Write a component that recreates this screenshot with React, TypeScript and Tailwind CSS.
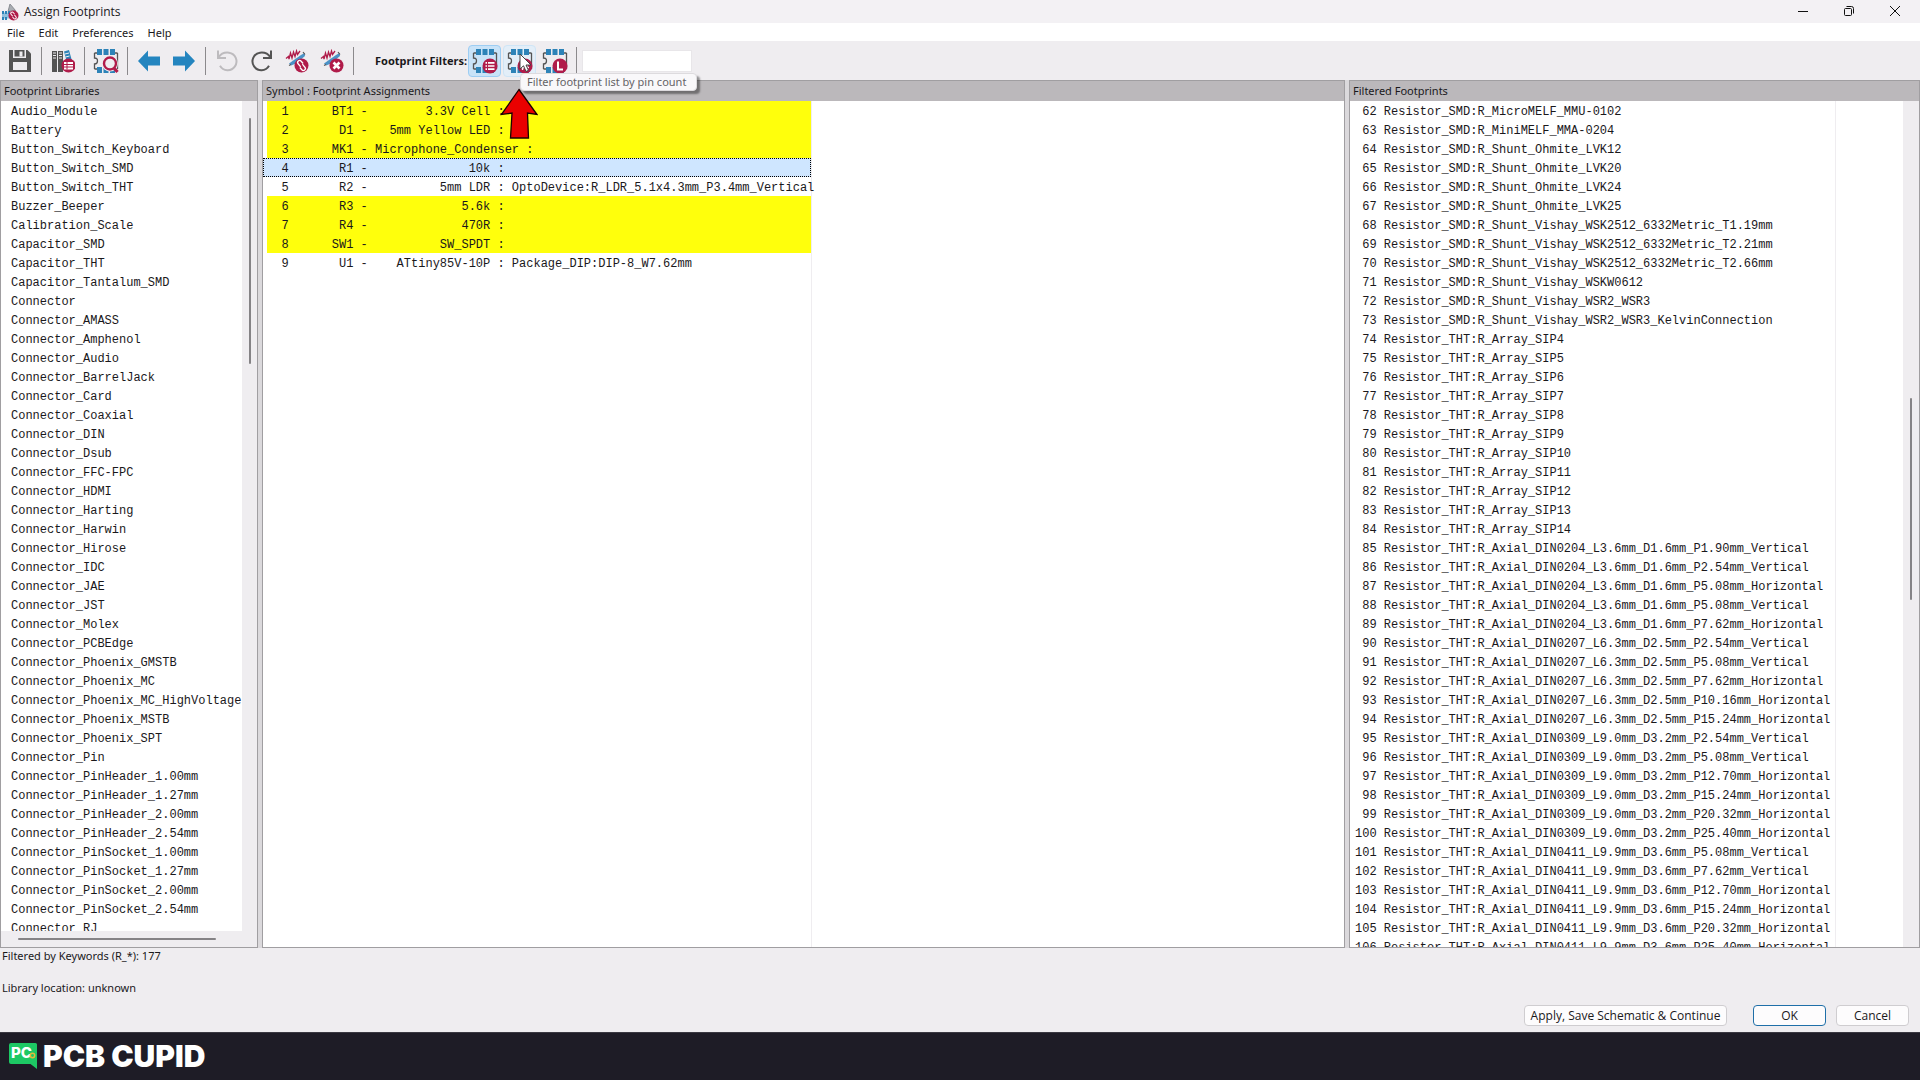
/**
 * Footprint assignment window.
 * Three list panels (libraries, symbols, filtered footprints) under a toolbar,
 * with the status lines, the dialog buttons and the channel strip below.
 */
import type { ReactNode } from "react";

interface Assignment {
  ref: string;
  value: string;
  footprint?: string;
  selected?: boolean;
}

const MENUS = ["File", "Edit", "Preferences", "Help"];

const LIBRARIES = [
  "Audio_Module", "Battery", "Button_Switch_Keyboard", "Button_Switch_SMD", "Button_Switch_THT",
  "Buzzer_Beeper", "Calibration_Scale", "Capacitor_SMD", "Capacitor_THT", "Capacitor_Tantalum_SMD",
  "Connector", "Connector_AMASS", "Connector_Amphenol", "Connector_Audio", "Connector_BarrelJack",
  "Connector_Card", "Connector_Coaxial", "Connector_DIN", "Connector_Dsub", "Connector_FFC-FPC",
  "Connector_HDMI", "Connector_Harting", "Connector_Harwin", "Connector_Hirose", "Connector_IDC",
  "Connector_JAE", "Connector_JST", "Connector_Molex", "Connector_PCBEdge", "Connector_Phoenix_GMSTB",
  "Connector_Phoenix_MC", "Connector_Phoenix_MC_HighVoltage", "Connector_Phoenix_MSTB",
  "Connector_Phoenix_SPT", "Connector_Pin", "Connector_PinHeader_1.00mm", "Connector_PinHeader_1.27mm",
  "Connector_PinHeader_2.00mm", "Connector_PinHeader_2.54mm", "Connector_PinSocket_1.00mm",
  "Connector_PinSocket_1.27mm", "Connector_PinSocket_2.00mm", "Connector_PinSocket_2.54mm", "Connector_RJ",
];

const ASSIGNMENTS: Assignment[] = [
  { ref: "BT1", value: "3.3V Cell" },
  { ref: "D1", value: "5mm Yellow LED" },
  { ref: "MK1", value: "Microphone_Condenser" },
  { ref: "R1", value: "10k", selected: true },
  { ref: "R2", value: "5mm LDR", footprint: "OptoDevice:R_LDR_5.1x4.3mm_P3.4mm_Vertical" },
  { ref: "R3", value: "5.6k" },
  { ref: "R4", value: "470R" },
  { ref: "SW1", value: "SW_SPDT" },
  { ref: "U1", value: "ATtiny85V-10P", footprint: "Package_DIP:DIP-8_W7.62mm" },
];

// The list is scrolled, the first visible footprint is number 62
const FIRST_FOOTPRINT = 62;
const FOOTPRINTS = [
  "Resistor_SMD:R_MicroMELF_MMU-0102",
  "Resistor_SMD:R_MiniMELF_MMA-0204",
  "Resistor_SMD:R_Shunt_Ohmite_LVK12",
  "Resistor_SMD:R_Shunt_Ohmite_LVK20",
  "Resistor_SMD:R_Shunt_Ohmite_LVK24",
  "Resistor_SMD:R_Shunt_Ohmite_LVK25",
  "Resistor_SMD:R_Shunt_Vishay_WSK2512_6332Metric_T1.19mm",
  "Resistor_SMD:R_Shunt_Vishay_WSK2512_6332Metric_T2.21mm",
  "Resistor_SMD:R_Shunt_Vishay_WSK2512_6332Metric_T2.66mm",
  "Resistor_SMD:R_Shunt_Vishay_WSKW0612",
  "Resistor_SMD:R_Shunt_Vishay_WSR2_WSR3",
  "Resistor_SMD:R_Shunt_Vishay_WSR2_WSR3_KelvinConnection",
  "Resistor_THT:R_Array_SIP4",
  "Resistor_THT:R_Array_SIP5",
  "Resistor_THT:R_Array_SIP6",
  "Resistor_THT:R_Array_SIP7",
  "Resistor_THT:R_Array_SIP8",
  "Resistor_THT:R_Array_SIP9",
  "Resistor_THT:R_Array_SIP10",
  "Resistor_THT:R_Array_SIP11",
  "Resistor_THT:R_Array_SIP12",
  "Resistor_THT:R_Array_SIP13",
  "Resistor_THT:R_Array_SIP14",
  "Resistor_THT:R_Axial_DIN0204_L3.6mm_D1.6mm_P1.90mm_Vertical",
  "Resistor_THT:R_Axial_DIN0204_L3.6mm_D1.6mm_P2.54mm_Vertical",
  "Resistor_THT:R_Axial_DIN0204_L3.6mm_D1.6mm_P5.08mm_Horizontal",
  "Resistor_THT:R_Axial_DIN0204_L3.6mm_D1.6mm_P5.08mm_Vertical",
  "Resistor_THT:R_Axial_DIN0204_L3.6mm_D1.6mm_P7.62mm_Horizontal",
  "Resistor_THT:R_Axial_DIN0207_L6.3mm_D2.5mm_P2.54mm_Vertical",
  "Resistor_THT:R_Axial_DIN0207_L6.3mm_D2.5mm_P5.08mm_Vertical",
  "Resistor_THT:R_Axial_DIN0207_L6.3mm_D2.5mm_P7.62mm_Horizontal",
  "Resistor_THT:R_Axial_DIN0207_L6.3mm_D2.5mm_P10.16mm_Horizontal",
  "Resistor_THT:R_Axial_DIN0207_L6.3mm_D2.5mm_P15.24mm_Horizontal",
  "Resistor_THT:R_Axial_DIN0309_L9.0mm_D3.2mm_P2.54mm_Vertical",
  "Resistor_THT:R_Axial_DIN0309_L9.0mm_D3.2mm_P5.08mm_Vertical",
  "Resistor_THT:R_Axial_DIN0309_L9.0mm_D3.2mm_P12.70mm_Horizontal",
  "Resistor_THT:R_Axial_DIN0309_L9.0mm_D3.2mm_P15.24mm_Horizontal",
  "Resistor_THT:R_Axial_DIN0309_L9.0mm_D3.2mm_P20.32mm_Horizontal",
  "Resistor_THT:R_Axial_DIN0309_L9.0mm_D3.2mm_P25.40mm_Horizontal",
  "Resistor_THT:R_Axial_DIN0411_L9.9mm_D3.6mm_P5.08mm_Vertical",
  "Resistor_THT:R_Axial_DIN0411_L9.9mm_D3.6mm_P7.62mm_Vertical",
  "Resistor_THT:R_Axial_DIN0411_L9.9mm_D3.6mm_P12.70mm_Horizontal",
  "Resistor_THT:R_Axial_DIN0411_L9.9mm_D3.6mm_P15.24mm_Horizontal",
  "Resistor_THT:R_Axial_DIN0411_L9.9mm_D3.6mm_P20.32mm_Horizontal",
  "Resistor_THT:R_Axial_DIN0411_L9.9mm_D3.6mm_P25.40mm_Horizontal",
];

// Fixed-width columns: number, reference, value, footprint
const formatAssignment = (item: Assignment, index: number) =>
  `${String(index + 1).padStart(3)} ${item.ref.padStart(8)} - ${item.value.padStart(16)} : ${item.footprint ?? ""}`;

const rowColor = (item: Assignment) => {
  if (item.selected) return "bg-[#cfe6ff] outline-1 -outline-offset-1 outline-dotted outline-black";
  return item.footprint ? "" : "bg-[#ffff0c]";
};

/* ---------- Icons ---------- */

function SaveIcon() {
  return (
    <svg width="24" height="24" viewBox="0 0 24 24">
      <path d="M1 1h18.500l3.500 3.500V23H1z" fill="#545454" />
      <path d="M5 1h13v8H5z" fill="#efedf0" />
      <path d="M6.500 1h10v6.500h-10z" fill="#545454" />
      <path d="M11.500 2.500h3v5h-3zM5 13h14v8H5z" fill="#efedf0" />
    </svg>
  );
}

function LibraryIcon() {
  return (
    <svg width="24" height="24" viewBox="0 0 24 24">
      <path d="M1 2h5v21H1zM7 2h5v21H7z" fill="#545454" />
      <path d="M2 4h3M2 6.500h3M2 9h3M8 4h3M8 6.500h3M8 9h3" stroke="#efedf0" />
      <path d="M13 2.500l5-1.500 3 11-5 1.500z" fill="#2d83b8" />
      <path d="M14 5l4-1M14.500 8l4-1" stroke="#efedf0" />
      <circle cx="17.500" cy="16.500" r="7" fill="#b01c4a" />
      <path d="M13 13h9v7.500h-9z" fill="#fff" />
      <path d="M13 15.500h9M13 18h9M16 13v7.500" stroke="#b01c4a" />
    </svg>
  );
}

// Chip outline shared by the viewer and the filter icons
function Chip({ children }: { children?: ReactNode }) {
  return (
    <svg width="26" height="26" viewBox="0 0 26 26">
      <path d="M1.500 5v5c2.500 0 3 1.500 3 3s-1 3-3 3v5M24.500 5v16M1.500 5h3M21 5h3.500M1.500 21h3" fill="none" stroke="#545454" strokeWidth="1.300" />
      <path d="M4 1h5v6H4zM10.500 1h5v6h-5zM17 1h5v6h-5zM4 19h5v6H4zM10.500 19h5v6h-5zM17 19h5v6h-5z" fill="#2d83b8" />
      {children}
    </svg>
  );
}

function MagnifierBadge() {
  return (
    <>
      <circle cx="17" cy="15.500" r="8" fill="#efedf0" />
      <path d="M20.500 19.500l4 4.500" stroke="#b01c4a" strokeWidth="3.200" />
      <circle cx="17" cy="15.500" r="6" fill="#efedf0" stroke="#b01c4a" strokeWidth="2.400" />
    </>
  );
}

function ListBadge() {
  return (
    <>
      <circle cx="18" cy="18" r="7.500" fill="#b01c4a" />
      <path d="M13.500 14.800h1.500M16 14.800h6.500M13.500 18h1.500M16 18h6.500M13.500 21.200h1.500M16 21.200h6.500" stroke="#fff" strokeWidth="1.700" />
    </>
  );
}

function PinCountBadge() {
  return (
    <>
      <circle cx="18" cy="18" r="7.500" fill="#b01c4a" />
      <path d="M14 16h8M14 19.500h8M16.500 13.500l-1 8.500M20.500 13.500l-1 8.500" stroke="#fff" strokeWidth="1.400" />
    </>
  );
}

function LibraryBadge() {
  return (
    <>
      <circle cx="18" cy="18" r="7.500" fill="#b01c4a" />
      <path d="M16 13.500v8h5" fill="none" stroke="#fff" strokeWidth="2" />
    </>
  );
}

function ArrowIcon({ right }: { right?: boolean }) {
  return (
    <svg width="24" height="24" viewBox="0 0 24 24" className={right ? "rotate-180" : ""}>
      <path d="M1 12L11 1.500V7.500h12v9H11v6z" fill="#2485bf" />
    </svg>
  );
}

function TurnIcon({ redo }: { redo?: boolean }) {
  return (
    <svg width="24" height="24" viewBox="0 0 24 24" className={redo ? "-scale-x-100" : ""} fill="none" stroke={redo ? "#545454" : "#bdbbbe"} strokeWidth="2">
      <path d="M3 1.500v7.500h8M3.500 8.500C6 4.500 10 3.200 14 3.700a8.800 8.800 0 1 1-9 13" />
    </svg>
  );
}

function SymbolIcon({ remove }: { remove?: boolean }) {
  return (
    <svg width="24" height="24" viewBox="0 0 24 24" fill="none">
      <path d="M1 9.500l2.500-2 .5 2.500L5.500 4l1.500 5L8.500 3l1.500 4.500L11.500 2l1 3.500L15 2" stroke="#b01c4a" strokeWidth="1.300" />
      <path d="M4 14.500L7.500 12 16 6l3.500-2 .5 3-9 7.500-5 2z" fill="#4b92c6" />
      <path d="M4 16.500l2-1M18 3l2 2.500" stroke="#545454" strokeWidth="1.200" />
      <circle cx="16.500" cy="16.500" r="7" fill="#b01c4a" />
      {remove ? (
        <path d="M13.500 13.500l6 6M19.500 13.500l-6 6" stroke="#fff" strokeWidth="2.600" />
      ) : (
        <g stroke="#fff" strokeWidth="1.300" transform="rotate(50 16.500 16.500)">
          <path d="M16 14h-3a2 2 0 0 0 0 4h4M17 19h3a2 2 0 0 0 0-4h-4" />
        </g>
      )}
    </svg>
  );
}

function AppIcon() {
  return (
    <svg width="18" height="18" viewBox="0 0 18 18">
      <path d="M7 8.500L9 1l5.500 6.500z" fill="#a9adb3" stroke="#8a8d93" />
      <path d="M1 9.500h8v6H1z" fill="#8fc0de" />
      <path d="M1 8h2v3H1zM4 8h2v3H4zM7 8h2v3H7zM1 14h2v3H1zM4 14h2v3H4z" fill="#2d83b8" />
      <circle cx="12.500" cy="12.500" r="5" fill="#b01c4a" />
      <g fill="none" stroke="#fff" transform="rotate(50 12.500 12.500)">
        <path d="M12 10.800h-2a1.400 1.400 0 0 0 0 2.800h2.500M13 14.200h2a1.400 1.400 0 0 0 0-2.800h-2.500" />
      </g>
    </svg>
  );
}

function Bubble() {
  return (
    <svg width="28" height="28" viewBox="0 0 28 28">
      <path d="M2 1h24.500a1.500 1.500 0 0 1 1.500 1.500V27l-6.500-5H2a2 2 0 0 1-2-2V3a2 2 0 0 1 2-2z" fill="#1dc864" />
      <text x="2" y="16" fill="#fff" fontSize="15" fontWeight="800" fontFamily="Inter, sans-serif">PC</text>
      <circle cx="23.500" cy="13.500" r="2.200" fill="#1dc864" stroke="#e5b93a" strokeWidth="1.500" />
    </svg>
  );
}

/* ---------- Building blocks ---------- */

function ToolButton({ label, state, children }: { label: string; state?: "active" | "hover"; children: ReactNode }) {
  const look =
    state === "active" ? "border-[#9dcdf3] bg-[#c9e3f8]" : state === "hover" ? "border-[#cfe5f6] bg-[#e3eef8]" : "border-transparent";
  return (
    <button type="button" aria-label={label} className="flex h-8 w-[35px] items-center justify-center px-px">
      <span className={`flex h-8 w-full items-center justify-center rounded-sm border ${look}`}>{children}</span>
    </button>
  );
}

function Separator() {
  return (
    <div className="flex h-7 w-2 justify-center">
      <div className="w-px bg-[#8b898c]" />
    </div>
  );
}

function Panel({ title, children }: { title: string; children: ReactNode }) {
  return (
    <section className="flex min-h-0 min-w-0 flex-col border border-[#a09ea1] bg-white">
      <h2 className="h-5 shrink-0 bg-[#bbb8bb] px-[3px] leading-5">{title}</h2>
      {children}
    </section>
  );
}

function DialogButton({ primary, className, children }: { primary?: boolean; className: string; children: ReactNode }) {
  return (
    <button
      type="button"
      className={`h-[21px] rounded border bg-[#fdfcfd] text-center font-['Open_Sans',sans-serif] text-[12px] ${primary ? "border-[#1f6fa8]" : "border-[#cfcdd0]"} ${className}`}
    >
      {children}
    </button>
  );
}

export default function App() {
  return (
    <div className="flex h-screen flex-col overflow-hidden bg-[#efedf0] font-['Noto_Sans',sans-serif] text-[11px] leading-4 text-[#1a181b]">
      {/* Title bar */}
      <header className="flex h-[23px] shrink-0 items-center bg-[#f3f1f4] pl-px">
        <AppIcon />
        <h1 className="flex-1 pl-[5px] font-['Open_Sans',sans-serif] text-[12px]">Assign Footprints</h1>
        <div className="flex items-center pr-[2px] pb-[2px]">
          <button type="button" aria-label="Minimize" className="flex w-[46px] justify-center">
            <svg width="12" height="12" viewBox="0 0 12 12"><path d="M1 6.500h10" stroke="#111" /></svg>
          </button>
          <button type="button" aria-label="Restore" className="flex w-[46px] justify-center">
            <svg width="12" height="12" viewBox="0 0 12 12" fill="none" stroke="#111">
              <rect x="1.500" y="3.500" width="7" height="7" rx="1" />
              <path d="M3.500 1.500h5a2 2 0 0 1 2 2v5" />
            </svg>
          </button>
          <button type="button" aria-label="Close" className="flex w-[46px] justify-center">
            <svg width="12" height="12" viewBox="0 0 12 12"><path d="M1 1l10 10M11 1L1 11" stroke="#111" /></svg>
          </button>
        </div>
      </header>

      {/* Menu */}
      <nav className="flex h-[18px] shrink-0 items-end bg-white">
        {MENUS.map((menu) => (
          <button key={menu} type="button" className="px-[7px]">{menu}</button>
        ))}
      </nav>

      {/* Toolbar */}
      <div className="flex h-[39px] shrink-0 items-center pl-[2px]">
        <ToolButton label="Save"><SaveIcon /></ToolButton>
        <Separator />
        <ToolButton label="Manage footprint libraries"><LibraryIcon /></ToolButton>
        <Separator />
        <ToolButton label="View selected footprint"><Chip><MagnifierBadge /></Chip></ToolButton>
        <Separator />
        <ToolButton label="Previous unassigned"><ArrowIcon /></ToolButton>
        <ToolButton label="Next unassigned"><ArrowIcon right /></ToolButton>
        <Separator />
        <ToolButton label="Undo"><TurnIcon /></ToolButton>
        <ToolButton label="Redo"><TurnIcon redo /></ToolButton>
        <ToolButton label="Auto-associate"><SymbolIcon /></ToolButton>
        <ToolButton label="Delete associations"><SymbolIcon remove /></ToolButton>
        <Separator />
        <label htmlFor="filter" className="w-[110px] text-right font-bold">Footprint Filters:</label>
        <ToolButton label="Filter by keywords" state="active"><Chip><ListBadge /></Chip></ToolButton>
        <div className="relative">
          <ToolButton label="Filter by pin count" state="hover"><Chip><PinCountBadge /></Chip></ToolButton>
          {/* Pointer, tooltip and red marker lie over the toolbar */}
          <svg className="absolute top-2 left-[17px] z-20" width="14" height="20" viewBox="0 0 14 20">
            <path d="M1 1v15l3.500-3.200L7 18.500l2.500-1.200-2.500-5.300h5z" fill="#fff" stroke="#444" />
          </svg>
          <div role="tooltip" className="absolute top-7 left-[18px] z-10 w-[177px] rounded-sm border border-[#dddbde] bg-[#f9f8fa] px-[6px] leading-4 whitespace-nowrap text-[#656366] shadow-[3px_3px_2px_#00000066]">
            Filter footprint list by pin count
          </div>
          <svg className="absolute top-[43px] -left-[2px] z-20" width="38" height="52" viewBox="0 0 38 52">
            <path d="M19 1.500L37 26.500l-9.500-1.500L28.500 50h-18l1.500-25-10.500 1.500z" fill="#ea0000" stroke="#1a0000" strokeWidth="1.300" />
          </svg>
        </div>
        <ToolButton label="Filter by library"><Chip><LibraryBadge /></Chip></ToolButton>
        <Separator />
        <input id="filter" type="text" className="ml-[2px] h-[22px] w-[110px] border border-[#e8e6e9] bg-white px-1" />
      </div>

      {/* Panels */}
      <main className="grid min-h-0 flex-1 grid-cols-[258px_minmax(0,1fr)_571px] grid-rows-[minmax(0,1fr)] gap-1 bg-[#dbd9dc]">
        <Panel title="Footprint Libraries">
          <div className="flex min-h-0 flex-1">
            <ul className="min-w-0 flex-1 overflow-y-clip pl-[10px] font-['Liberation_Mono',monospace] text-[12px] leading-[15px] whitespace-pre">
              {LIBRARIES.map((name) => (
                <li key={name} className="pt-1">{name}</li>
              ))}
            </ul>
            <div className="flex w-[15px] justify-center bg-[#efedf0] pt-[17px]">
              <div className="h-[246px] w-[2px] rounded bg-[#858386]" />
            </div>
          </div>
          <div className="flex h-4 shrink-0 items-center bg-[#efedf0] pl-[17px]">
            <div className="h-[2px] w-[198px] rounded bg-[#858386]" />
          </div>
        </Panel>

        <Panel title="Symbol : Footprint Assignments">
          <ul className="w-[549px] flex-1 border-r border-[#efedf0] font-['Liberation_Mono',monospace] text-[12px] leading-[15px] whitespace-pre">
            {ASSIGNMENTS.map((item, index) => (
              <li key={item.ref} className={item.selected ? "" : "pl-1"}>
                <div className={`pt-1 ${item.selected ? "pl-1" : ""} ${rowColor(item)}`}>{formatAssignment(item, index)}</div>
              </li>
            ))}
          </ul>
        </Panel>

        <Panel title="Filtered Footprints">
          <div className="flex min-h-0 flex-1">
            <ul className="w-[486px] overflow-y-clip border-r border-[#efedf0] pl-[5px] font-['Liberation_Mono',monospace] text-[12px] leading-[15px] whitespace-pre">
              {FOOTPRINTS.map((name, index) => (
                <li key={name} className="pt-1">{`${String(FIRST_FOOTPRINT + index).padStart(3)} ${name}`}</li>
              ))}
            </ul>
            <div className="ml-auto flex w-4 justify-center bg-[#efedf0] pt-[297px]">
              <div className="h-[202px] w-[2px] rounded bg-[#858386]" />
            </div>
          </div>
        </Panel>
      </main>

      {/* Status lines and dialog buttons */}
      <div className="flex h-[84px] shrink-0 justify-between pl-[2px]">
        <div className="flex flex-col gap-4">
          <p>Filtered by Keywords (R_*): 177</p>
          <p>Library location: unknown</p>
        </div>
        <div className="flex items-end pr-[11px] pb-[6px]">
          <DialogButton className="w-[203px]">Apply, Save Schematic &amp; Continue</DialogButton>
          <DialogButton primary className="ml-[26px] w-[73px]">OK</DialogButton>
          <DialogButton className="ml-[10px] w-[73px]">Cancel</DialogButton>
        </div>
      </div>

      {/* Channel strip */}
      <footer className="flex h-12 shrink-0 items-center gap-[6px] border-t border-[#3a3841] bg-[#1e1c26] pb-[2px] pl-[9px] text-white">
        <Bubble />
        <span className="font-['Inter',sans-serif] text-[30px] leading-8 font-black">PCB CUPID</span>
      </footer>
    </div>
  );
}
